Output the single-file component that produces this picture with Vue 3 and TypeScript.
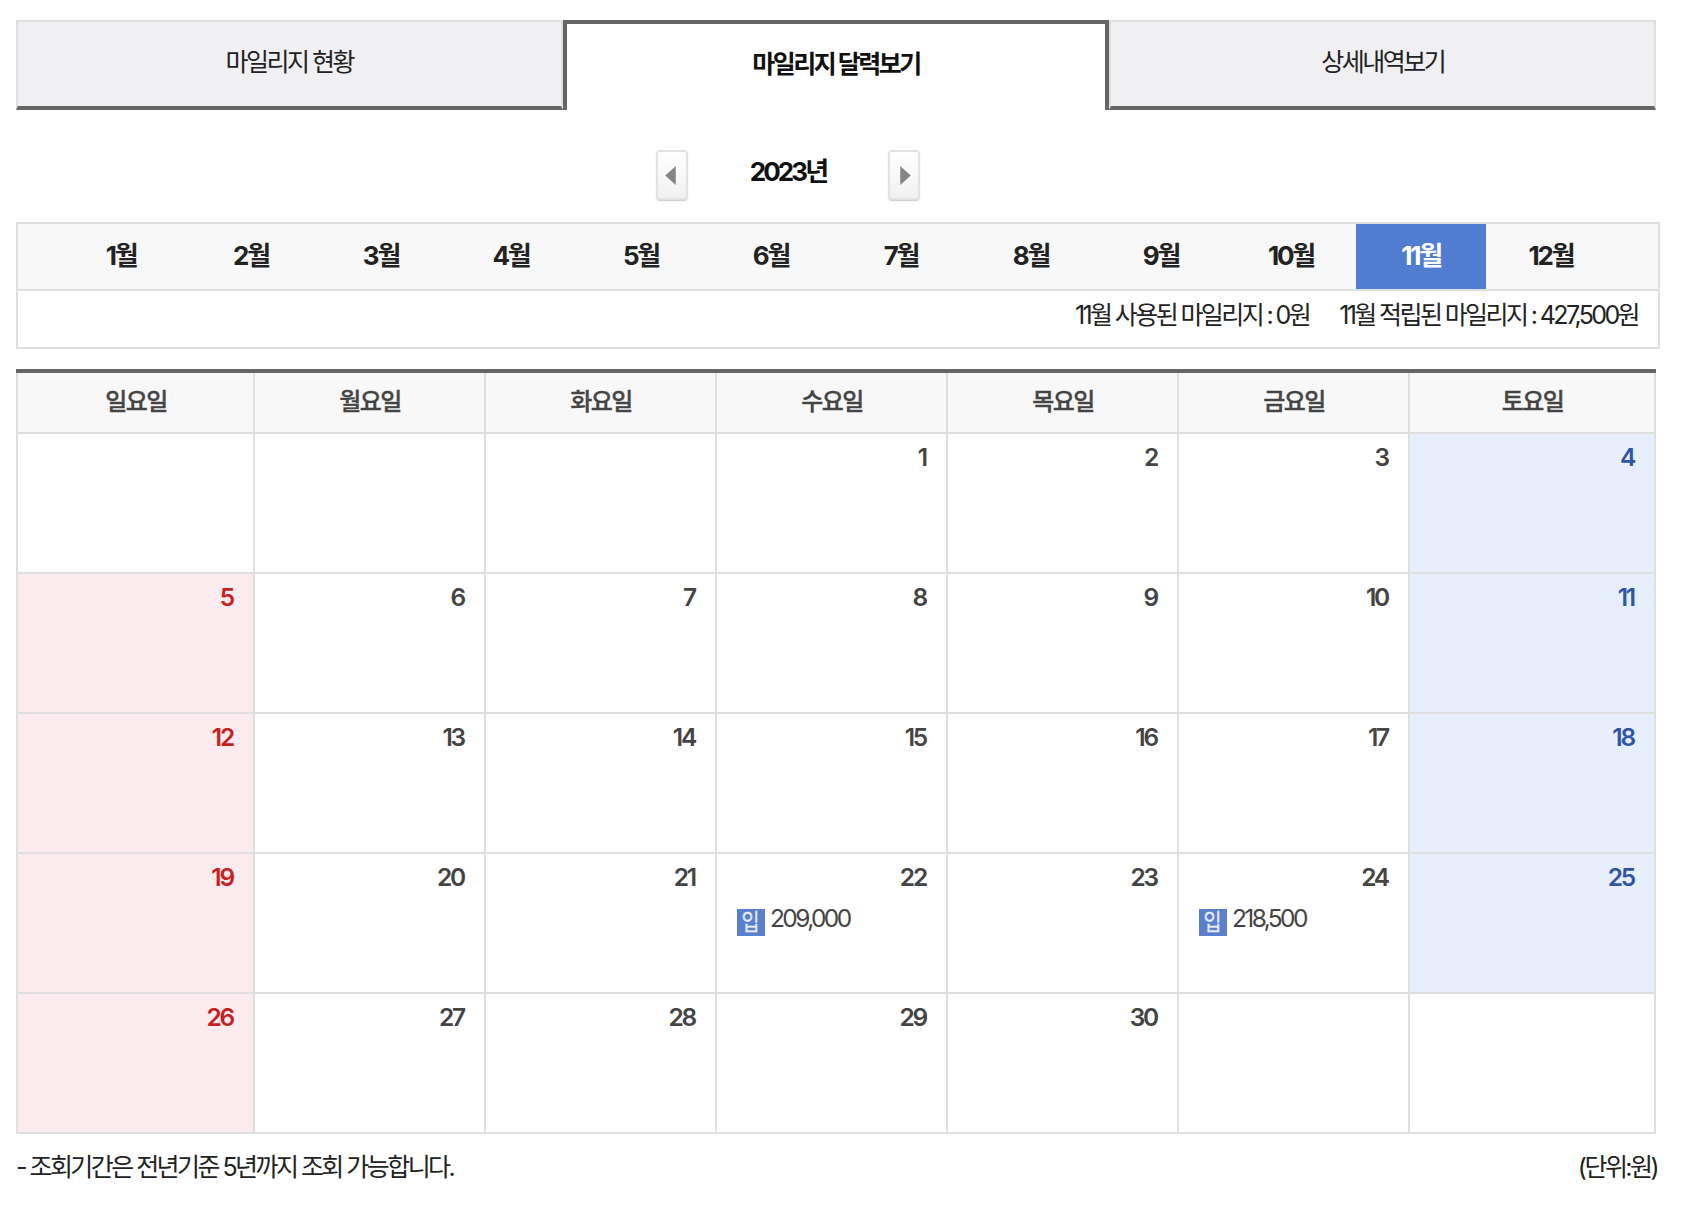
<script setup lang="ts">
const tabs = ['마일리지 현황', '마일리지 달력보기', '상세내역보기']
const months = Array.from({ length: 12 }, (_, i) => i + 1)
const weekdays = ['일요일', '월요일', '화요일', '수요일', '목요일', '금요일', '토요일']
const entries: Record<number, string> = { 22: '209,000', 24: '218,500' }
const cells: (number | null)[] = [null, null, null, ...Array.from({ length: 30 }, (_, i) => i + 1), null, null]
</script>

<template>
  <div class="page">
    <nav class="tabs">
      <div v-for="(t, i) in tabs" :key="t" class="tab" :class="{ active: i === 1 }">{{ t }}</div>
    </nav>

    <div class="year-nav">
      <button class="arrow prev" aria-label="이전">
        <svg width="11" height="19" viewBox="0 0 10 18"><path d="M10 0V18L0 9Z" fill="#858585" /></svg>
      </button>
      <strong class="year">2023년</strong>
      <button class="arrow next" aria-label="다음">
        <svg width="11" height="19" viewBox="0 0 10 18"><path d="M0 0V18L10 9Z" fill="#858585" /></svg>
      </button>
    </div>

    <section class="month-box">
      <ul class="months">
        <li v-for="m in months" :key="m" :class="{ on: m === 11 }">{{ m }}월</li>
      </ul>
      <div class="summary">
        <span>11월 사용된 마일리지 : 0원</span>
        <span>11월 적립된 마일리지 : 427,500원</span>
      </div>
    </section>

    <section class="calendar">
      <div v-for="w in weekdays" :key="w" class="head">{{ w }}</div>
      <div
        v-for="(d, i) in cells"
        :key="i"
        class="cell"
        :class="{ sun: d !== null && i % 7 === 0, sat: d !== null && i % 7 === 6 }"
      >
        <div class="date">{{ d }}</div>
        <div v-if="d !== null && entries[d]" class="entry">
          <span class="badge"><span class="badge-glyph">입</span></span>
          <span class="amount">{{ entries[d] }}</span>
        </div>
      </div>
    </section>

    <footer class="foot">
      <span>- 조회기간은 전년기준 5년까지 조회 가능합니다.</span>
      <span>(단위:원)</span>
    </footer>
  </div>
</template>

<style>
html, body { margin: 0; background: #fff; }
</style>

<style scoped>
.page {
  box-sizing: border-box;
  width: 1684px;
  height: 1208px;
  padding: 20px 0 0 16px;
  font-family: Inter, "Noto Sans CJK KR", sans-serif;
  color: #222;
  overflow: hidden;
}
.tabs { display: grid; grid-template-columns: repeat(3, 1fr); width: 1640px; height: 90px; }
.tab {
  box-sizing: border-box;
  display: flex;
  align-items: center;
  justify-content: center;
  padding-bottom: 8px;
  background: #f0f0f2;
  border: 2px solid #dfdfdf;
  border-bottom: 4px solid #666;
  font-size: 25px;
  letter-spacing: -2.5px;
  color: #222;
}
.tab.active {
  background: #fff;
  border: 4px solid #666;
  border-bottom: 0;
  font-weight: 700;
  color: #111;
  padding-bottom: 10px;
}
.year-nav {
  display: flex;
  align-items: center;
  margin-top: 40px;
  height: 50px;
  padding-left: 640px;
}
.arrow {
  box-sizing: border-box;
  width: 32px;
  height: 50px;
  padding: 0;
  display: flex;
  align-items: center;
  justify-content: center;
  border: 2px solid #e2e2e2;
  border-radius: 4px;
  background: linear-gradient(#fff, #f1f1f1);
  box-shadow: 0 1px 1px #ccc;
}
.arrow.prev svg { margin-right: 3px; }
.arrow.next svg { margin-left: 2px; }
.year {
  width: 200px;
  text-align: center;
  font-size: 26px;
  font-weight: 700;
  letter-spacing: -2.9px;
  color: #111;
  padding-bottom: 12px;
}
.month-box {
  box-sizing: border-box;
  width: 1644px;
  height: 127px;
  margin-top: 22px;
  border: 2px solid #dfdfdf;
}
.months {
  display: flex;
  margin: 0;
  padding: 0 0 0 38px;
  list-style: none;
  height: 65px;
  background: #f8f8f8;
  border-bottom: 2px solid #dfdfdf;
}
.months li {
  width: 130px;
  display: flex;
  align-items: center;
  justify-content: center;
  padding-bottom: 6px;
  box-sizing: border-box;
  font-size: 26px;
  font-weight: 700;
  letter-spacing: -2.2px;
  color: #222;
}
.months li.on { background: #507dcf; color: #fff; }
.summary {
  display: flex;
  justify-content: flex-end;
  gap: 30px;
  padding: 4px 20px 0 0;
  font-size: 25px;
  letter-spacing: -2.6px;
  color: #222;
}
.calendar {
  display: grid;
  grid-template-columns: 237px repeat(5, 231px) 248px;
  width: 1640px;
  margin-top: 20px;
  border-top: 4px solid #666;
  box-sizing: border-box;
}
.head, .cell {
  box-sizing: border-box;
  border-left: 2px solid #dfdfdf;
  border-bottom: 2px solid #dfdfdf;
}
.head:nth-child(7), .cell:nth-child(7n) { border-right: 2px solid #dfdfdf; }
.head {
  height: 61px;
  display: flex;
  align-items: center;
  justify-content: center;
  padding: 0 0 6px 1px;
  background: #f8f8f8;
  font-size: 24px;
  font-weight: 500;
  -webkit-text-stroke: 0.35px #444;
  letter-spacing: -1.5px;
  color: #444;
}
.cell { height: 140px; padding: 8px 20px 0 20px; background: #fff; }
.cell.sun { background: #fbebee; }
.cell.sat { background: #e8effc; }
.date {
  height: 33px;
  text-align: right;
  font-size: 24.5px;
  font-weight: 600;
  letter-spacing: -2.2px;
  color: #444;
}
.sun .date { color: #c8201f; }
.sat .date { color: #2f55a8; }
.entry { display: flex; align-items: flex-start; margin-top: 14px; }
.badge {
  width: 28px;
  height: 27px;
  margin-right: 5px;
  display: flex;
  align-items: center;
  justify-content: center;
  background: #5a80cd;
  color: #e6edfb;
  font-size: 23px;
  line-height: 27px;
}
.badge-glyph { display: block; transform: scaleX(0.85); -webkit-text-stroke: 0.3px #e6edfb; }
.amount {
  margin-top: -4px;
  font-size: 24.5px;
  line-height: 27px;
  letter-spacing: -2.6px;
  color: #444;
}
.foot {
  display: flex;
  justify-content: space-between;
  width: 1641px;
  margin-top: 13px;
  font-size: 25px;
  letter-spacing: -2.55px;
  color: #222;
}
</style>
